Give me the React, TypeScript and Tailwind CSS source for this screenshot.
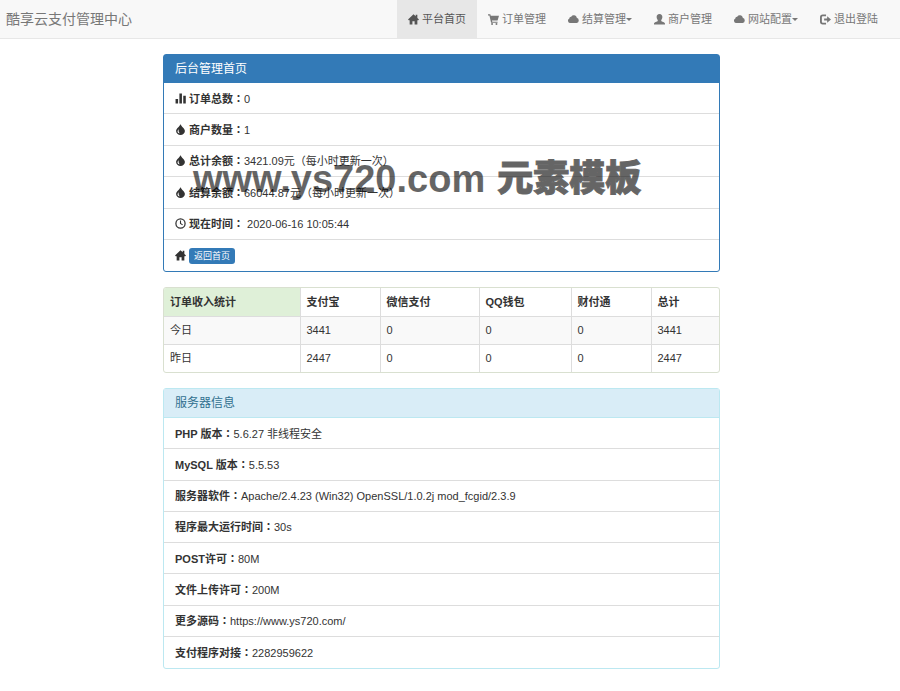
import type { ReactNode } from 'react';

const shapes: Record<string, ReactNode> = {
  home: (
    <path d="M10 0.5 L0 10 L1.4 11.4 H3 V19 H8 V13 H12 V19 H17 V11.4 H18.6 L20 10 L17 7.1 V1.5 H14 V4.3 Z" />
  ),
  cart: (
    <path d="M0 0.5 H4.2 L5 3.2 H20 L17.4 12 H7.2 L7.8 14 H17.4 V16 H5.6 L2.6 2.6 H0 Z M7.4 16.2 A1.8 1.8 0 1 1 7.4 19.8 A1.8 1.8 0 1 1 7.4 16.2 Z M15.4 16.2 A1.8 1.8 0 1 1 15.4 19.8 A1.8 1.8 0 1 1 15.4 16.2 Z" />
  ),
  cloud: (
    <path d="M4.4 16.5 A4.5 4.5 0 0 1 2.4 8 A3.2 3.2 0 0 1 5.8 4.8 A5.6 5.6 0 0 1 16 7 A4.9 4.9 0 0 1 15.8 16.5 Z" />
  ),
  user: (
    <path d="M10 0 C13.6 0 15.2 2.4 15.2 5.6 C15.2 8.2 14 10 13.2 11 V12.8 C13.8 14.2 20 14.8 20 17.6 V19.2 H0 V17.6 C0 14.8 6.2 14.2 6.8 12.8 V11 C6 10 4.8 8.2 4.8 5.6 C4.8 2.4 6.4 0 10 0 Z" />
  ),
  logout: (
    <path d="M11 1 V4.2 H5 C4 4.2 3.4 4.8 3.4 5.8 V14.2 C3.4 15.2 4 15.8 5 15.8 H11 V19 H5 C1.8 19 0 17.4 0 14.2 V5.8 C0 2.6 1.8 1 5 1 Z M13 4 L20 10 L13 16 V12 H7.5 V8 H13 Z" />
  ),
  stats: (
    <path d="M1 11 H5.6 V19 H1 Z M8 1 H12.6 V19 H8 Z M15 5 H19.6 V19 H15 Z" />
  ),
  tint: (
    <path
      fillRule="evenodd"
      d="M10 0 C11.2 4.6 18 8.2 18 12.6 A8 7.4 0 0 1 2 12.6 C2 8.2 8.8 4.6 10 0 Z M6.8 9.5 C4.8 11.5 4.2 13.4 5 15 C5.8 16.6 7.6 17 8.8 16.8 C6.8 15 6 12.5 6.8 9.5 Z"
    />
  ),
  time: (
    <path
      fillRule="evenodd"
      d="M10 0.5 A9.5 9.5 0 1 1 10 19.5 A9.5 9.5 0 1 1 10 0.5 Z M10 2.8 A7.2 7.2 0 1 0 10 17.2 A7.2 7.2 0 1 0 10 2.8 Z M9 4.5 H11 V9.4 L14.4 11.6 L13.4 13.2 L9 10.5 Z"
    />
  ),
};

function Icon({ name }: { name: string }) {
  return (
    <svg viewBox="0 0 20 20" className="w-[11px] h-[11px] shrink-0 fill-current" aria-hidden="true">
      {shapes[name]}
    </svg>
  );
}

const navItems = [
  { icon: 'home', text: '平台首页', active: true },
  { icon: 'cart', text: '订单管理' },
  { icon: 'cloud', text: '结算管理', caret: true },
  { icon: 'user', text: '商户管理' },
  { icon: 'cloud', text: '网站配置', caret: true },
  { icon: 'logout', text: '退出登陆' },
];

const summary = [
  { icon: 'stats', label: '订单总数', value: '0' },
  { icon: 'tint', label: '商户数量', value: '1' },
  { icon: 'tint', label: '总计余额', value: '3421.09元（每小时更新一次）' },
  { icon: 'tint', label: '结算余额', value: '66044.87元（每小时更新一次）' },
  { icon: 'time', label: '现在时间', value: '\u00a02020-06-16 10:05:44' },
];

const columns = ['支付宝', '微信支付', 'QQ钱包', '财付通', '总计'];

const income = [
  { day: '今日', values: ['3441', '0', '0', '0', '3441'] },
  { day: '昨日', values: ['2447', '0', '0', '0', '2447'] },
];

const server = [
  { label: 'PHP 版本', value: '5.6.27 非线程安全' },
  { label: 'MySQL 版本', value: '5.5.53' },
  { label: '服务器软件', value: 'Apache/2.4.23 (Win32) OpenSSL/1.0.2j mod_fcgid/2.3.9' },
  { label: '程序最大运行时间', value: '30s' },
  { label: 'POST许可', value: '80M' },
  { label: '文件上传许可', value: '200M' },
  { label: '更多源码', value: 'https://www.ys720.com/' },
  { label: '支付程序对接', value: '2282959622' },
];

function Label({ children }: { children: ReactNode }) {
  return (
    <b className="font-bold">
      {children}
      {/* the TC face keeps the colon in the middle of its box */}
      <span className="font-['Noto_Sans_CJK_TC',sans-serif]">：</span>
    </b>
  );
}

export default function App() {
  return (
    <div className="bg-white text-[#333] text-[11px] leading-4 font-['Liberation_Sans','Noto_Sans_CJK_SC',sans-serif]">
      <nav className="flex justify-between bg-[#f8f8f8] border-b border-[#e7e7e7] pl-[6px] pr-[11px] text-[#777]">
        <a href="#" className="flex items-center text-sm">酷享云支付管理中心</a>
        <ul className="flex">
          {navItems.map((item) => (
            <li key={item.text}>
              <a
                href="#"
                className={`flex items-center h-[38px] px-[11px] ${item.active ? 'bg-[#e7e7e7] text-[#555]' : ''}`}
              >
                <Icon name={item.icon} />
                <span className="ml-[3px]">{item.text}</span>
                {item.caret && (
                  <span className="border-x-3 border-t-3 border-x-transparent border-t-[#777]" />
                )}
              </a>
            </li>
          ))}
        </ul>
      </nav>

      <div className="pr-[17px] pt-[15px] pb-[23px]">
        <main className="max-w-[557px] mx-auto space-y-[15px]">
          <section className="relative border border-[#337ab7] rounded-[3px]">
            <h3 className="bg-[#337ab7] text-white text-xs leading-4 px-[11px] py-[6px]">后台管理首页</h3>
            <ul className="grid auto-rows-fr min-h-[157px]">
              {summary.map((row) => (
                <li key={row.label} className="flex items-center px-[11px] border-b border-[#ddd]">
                  <Icon name={row.icon} />
                  <span className="ml-[3px]">
                    <Label>{row.label}</Label>
                    {row.value}
                  </span>
                </li>
              ))}
            </ul>
            <div className="flex items-center h-[31px] px-[11px]">
              <Icon name="home" />
              <a href="#" className="ml-[3px] bg-[#337ab7] text-white text-[9px] leading-4 px-[5px] rounded-[3px]">
                返回首页
              </a>
            </div>
            <div className="absolute left-[29px] top-[104px] flex items-center gap-3 whitespace-nowrap font-bold text-black opacity-60 leading-10 pointer-events-none">
              <span className="text-[38px]">www.ys720.com</span>
              <span className="text-[36px] font-black [-webkit-text-stroke:1px_black]">元素模板</span>
            </div>
          </section>

          <div className="border border-[#d9e0d0] rounded-[3px] overflow-hidden">
            <table className="w-full table-fixed border-collapse text-left">
              <thead>
                <tr className="h-7">
                  <th className="w-[136px] px-[6px] bg-[#dff0d8]">订单收入统计</th>
                  {columns.map((name, i) => (
                    <th
                      key={name}
                      className={`px-[6px] border-l border-[#ddd] ${['w-[80px]', 'w-[99px]', 'w-[92px]', 'w-[80px]', ''][i]}`}
                    >
                      {name}
                    </th>
                  ))}
                </tr>
              </thead>
              <tbody>
                {income.map((row) => (
                  <tr key={row.day} className="h-7 border-t border-[#ddd] odd:bg-[#f9f9f9]">
                    <td className="px-[6px]">{row.day}</td>
                    {row.values.map((v, i) => (
                      <td key={i} className="px-[6px] border-l border-[#ddd]">{v}</td>
                    ))}
                  </tr>
                ))}
              </tbody>
            </table>
          </div>

          <section className="border border-[#bce8f1] rounded-[3px]">
            <h3 className="bg-[#d9edf7] text-[#31708f] text-xs leading-4 px-[11px] py-[6px] border-b border-[#bce8f1]">
              服务器信息
            </h3>
            <ul className="grid auto-rows-fr min-h-[250px]">
              {server.map((row) => (
                <li key={row.label} className="flex items-center px-[11px] border-b border-[#ddd] last:border-b-0">
                  <span>
                    <Label>{row.label}</Label>
                    {row.value}
                  </span>
                </li>
              ))}
            </ul>
          </section>
        </main>
      </div>
    </div>
  );
}
